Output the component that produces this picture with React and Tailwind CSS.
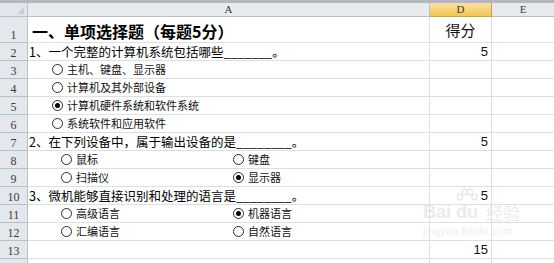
import React from 'react';

const cjk = "font-['Noto_Sans_CJK_SC',sans-serif]";

// radio form control, drawn like the Excel option button
const Radio = ({ on }) => (
  <span className="w-[11px] h-[11px] rounded-full border border-[#2a2a2a] bg-white flex items-center justify-center shrink-0">
    {on && <span className="w-[5px] h-[5px] rounded-full bg-black" />}
  </span>
);

const Option = ({ text, on, className = '' }) => (
  <span className={`flex items-center gap-[4px] ${className}`}>
    <Radio on={on} />
    <span className={`${cjk} text-[11px] leading-none text-[#111]`}>{text}</span>
  </span>
);

const rows = [
  { n: 1, h: 'h-[26px]', title: '一、单项选择题（每题5分）', d: '得分' },
  { n: 2, q: '1、一个完整的计算机系统包括哪些_______。', d: '5' },
  { n: 3, single: { text: '主机、键盘、显示器' } },
  { n: 4, single: { text: '计算机及其外部设备' } },
  { n: 5, single: { text: '计算机硬件系统和软件系统', on: true } },
  { n: 6, single: { text: '系统软件和应用软件' } },
  { n: 7, q: '2、在下列设备中，属于输出设备的是________。', d: '5' },
  { n: 8, pair: [{ text: '鼠标' }, { text: '键盘' }] },
  { n: 9, pair: [{ text: '扫描仪' }, { text: '显示器', on: true }] },
  { n: 10, q: '3、微机能够直接识别和处理的语言是________。', d: '5' },
  { n: 11, pair: [{ text: '高级语言' }, { text: '机器语言', on: true }] },
  { n: 12, pair: [{ text: '汇编语言' }, { text: '自然语言' }] },
  { n: 13, d: '15' },
  { n: '' },
];

function Row({ r }) {
  let a = null;
  if (r.title) {
    a = <span className={`${cjk} text-[16px] font-bold leading-none text-black pl-[4px] pb-[3px]`}>{r.title}</span>;
  } else if (r.q) {
    a = <span className={`${cjk} text-[12.5px] leading-none text-black pl-[1px] pb-[2px]`}>{r.q}</span>;
  } else if (r.single) {
    a = <Option {...r.single} className="pl-[24px] pb-[3px]" />;
  } else if (r.pair) {
    a = (
      <span className="flex pl-[33px] pb-[3px]">
        <Option {...r.pair[0]} className="w-[172px]" />
        <Option {...r.pair[1]} />
      </span>
    );
  }
  const isTitle = !!r.title;
  return (
    <div className={`flex ${r.h || 'h-[18px]'} shrink-0`}>
      <div className="w-[28px] shrink-0 bg-[#e4e7ec] border-r border-b border-[#b9c0ca] flex items-end justify-center pb-[1px] font-['Liberation_Serif',serif] text-[12px] leading-none text-[#3c3c3c]">
        {r.n}
      </div>
      <div className="w-[402px] shrink-0 border-r border-b border-[#dcdfe3] flex items-end">{a}</div>
      <div
        className={`w-[62px] shrink-0 border-r border-b border-[#dcdfe3] flex items-end pb-[2px] ${
          isTitle ? `justify-center ${cjk} text-[15px] pb-[5px]` : "justify-end pr-[3px] font-['Liberation_Sans',sans-serif] text-[13px]"
        } leading-none text-[#111]`}
      >
        {r.d}
      </div>
      <div className="flex-1 border-b border-[#dcdfe3]" />
    </div>
  );
}

export default function App() {
  return (
    <div className="w-[554px] h-[263px] overflow-hidden bg-white relative">
      <div className="h-[3px] bg-[#b4b8be]" />
      {/* column headers */}
      <div className="flex h-[14px] font-['Liberation_Serif',serif] text-[11px] leading-none text-[#3a3a3a]">
        <div className="w-[28px] shrink-0 bg-[#e2e5ea] border-r border-b border-[#b9c0ca] relative">
          <span className="absolute right-[3px] bottom-[2px] w-0 h-0 border-l-[7px] border-l-transparent border-b-[7px] border-b-[#c9cdd3]" />
        </div>
        <div className="w-[402px] shrink-0 bg-[#e8eaee] border-r border-b border-[#b9c0ca] flex items-center justify-center">A</div>
        <div className="w-[62px] shrink-0 bg-gradient-to-b from-[#fbe29a] to-[#f1c654] border-r border-b border-[#c2a458] flex items-center justify-center">D</div>
        <div className="flex-1 bg-[#e8eaee] border-b border-[#b9c0ca] flex items-center justify-center">E</div>
      </div>
      {rows.map((r, i) => (
        <Row key={i} r={r} />
      ))}
      {/* watermark */}
      <div className="absolute left-[423px] top-[203px] flex flex-col items-start pointer-events-none opacity-60">
        <div className="flex items-end">
          <span className="font-['Liberation_Sans',sans-serif] font-bold text-[18px] leading-none text-[#dedede]">Bai</span>
          <span className="relative ml-[2px] w-[28px] flex justify-center">
            <svg className="absolute -top-[15px] left-[3px]" width="22" height="16" viewBox="0 0 22 16" fill="none" stroke="#dcdcdc" strokeWidth="1.5">
              <ellipse cx="4" cy="9" rx="2.5" ry="3" />
              <ellipse cx="8.5" cy="4" rx="2.5" ry="3" />
              <ellipse cx="14" cy="4" rx="2.5" ry="3" />
              <ellipse cx="18.5" cy="9" rx="2.5" ry="3" />
            </svg>
            <span className="font-['Liberation_Sans',sans-serif] font-bold text-[18px] leading-none text-[#dedede]">du</span>
          </span>
          <span className={`${cjk} ml-[5px] text-[17px] leading-none text-[#dedede]`}>经验</span>
        </div>
        <span className="font-['Liberation_Sans',sans-serif] text-[10px] leading-none text-[#e2e2e2] mt-[6px] tracking-[0.5px]">jingyan.baidu.com</span>
      </div>
    </div>
  );
}
